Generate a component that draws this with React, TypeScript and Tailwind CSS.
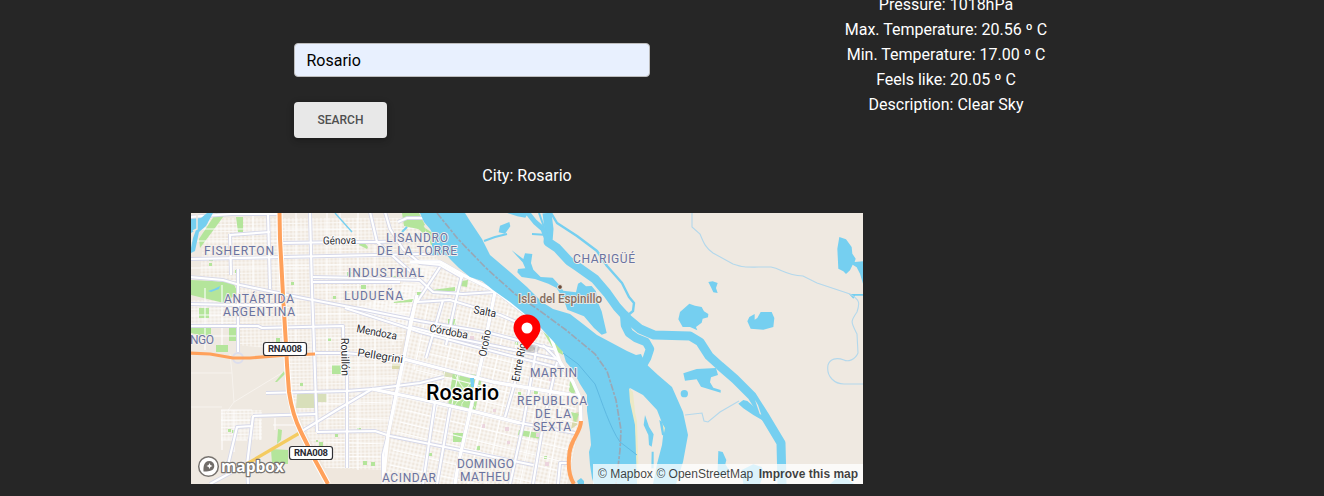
import React from "react";

const WATER = "#75cff0";
const PARK = "#b4e59b";
const SANS = '"Roboto", "Open Sans", sans-serif';

const mainRoads = [
  "M190 259L283 257L420 254L450 254",
  "M190 217L232 214L281 214",
  "M283 243L345 242L377 242L410 241",
  "M313 277L360 278L420 280",
  "M313 282L400 282",
  "M190 277L223 280L240 285L283 294L313 300L360 309L420 321L490 333L556 350",
  "M190 304L236 305L283 305",
  "M190 326L258 326L262 328L343 326L344 375",
  "M230 235L270 232",
  "M230 234L231 275",
  "M238 269L238 352",
  "M268 213L270 289",
  "M310 213L312 290L314 345L317 432",
  "M370 212L377 242L403 265L420 280L433 292L463 294L495 292",
  "M385 212L390 229L403 249L420 263L440 265L463 278",
  "M410 262L440 262L463 275L497 292L527 315L550 335",
  "M398 222L407 218L430 218",
  "M417 295L410 322L405 352L397 388L388 435L383 455L383 484",
  "M440 267L417 302M462 275L456 300L446 345",
  "M417 302L450 300L500 315L540 332",
  "M410 327L450 337L500 347L556 359",
  "M345 308L420 332L500 353L567 370",
  "M313 353L345 353L400 358L450 371L493 382L577 396",
  "M495 292L487 332L482 358L470 412L458 465L455 484",
  "M266 393L347 391L372 389L420 399L468 410L520 423L575 433",
  "M210 484L245 465",
  "M302 431L340 408L372 389L420 383L444 377",
  "M253 416L317 414",
  "M228 465L237 427L252 426M253 416L247 465L248 484",
  "M317 432L375 431L390 436L420 442L450 448L533 465",
  "M347 352L347 468",
  "M435 402L423 484M450 408L437 484M443 300L426 358",
  "M520 365L505 417M537 345L523 425L510 484M557 362L543 425L533 484",
  "M543 345L560 362L573 382L580 398L581 422",
  "M558 484L560 463L568 463",
];

const minorRoads = [
  "M190 229H280M190 241H280M190 268H310M285 229H385M285 265H375M315 290H412M190 315H310M190 336H240M315 314H405M315 338H405",
  "M205 288V350M222 285V345M253 213V300M296 213V350M327 213V430M340 213V325M358 213V470M375 245V390M393 270V345",
  "M315 365H402M315 378H400M315 404L392 402M317 418L390 420M324 442L386 444M330 456L382 457",
  "M222 410V450M234 410V452M221 420H250M221 410H252M221 440H247M260 420V440M275 418V430M273 425H298",
  "M420 340L570 377M418 351L570 387M416 370L575 409M412 385L578 423M405 410L570 450M400 422L568 463M397 432L560 471M393 450L540 484M390 465L480 484",
  "M428 305L414 370M458 310L420 484M472 305L440 464M508 312L468 484M521 321L486 484M548 346L520 484M565 380L548 484",
];

const parks = [
  "M191 280L233 282L238 293L224 303L191 295Z",
  "M216 213H226L212 232L200 248L199 239Z",
  "M236 217H243V232H238Z",
  "M191 327H211V336H203L191 333Z",
  "M199 308H209V318H199Z",
  "M229 328H236V341H229ZM216 345H228V352H216Z",
  "M362 240L368 247L367 249L359 245Z",
  "M402 213H419L425 225L418 229L404 226Z",
  "M410 213L418 216L426 230L424 234L414 225Z",
  "M432 290L455 287L455 291L433 292Z",
  "M448 319H456V325H448Z",
  "M453 372L478 375L482 378L475 411L448 406Z",
  "M332 365H341V374H332Z",
  "M275 382L284 371L285 374L277 382Z",
  "M271 449L288 450V464H272Z",
  "M278 429L282 430L281 440L277 444Z",
  "M453 433H463V442H453Z",
  "M519 430L541 433L540 439L518 435Z",
  "M461 281L468 280L467 287L461 286Z",
  "M541 328L562 348L563 355L554 350Z",
  "M570 380L576 388L574 395L569 391Z",
  "M571 412L579 414L575 423Z",
  "M393 302L413 299L412 302L394 303Z",
  "M361 285H366V289H361Z",
  "M425 228L434 234L436 244L431 245Z",
  "M498 291L512 300L516 305L509 302Z",
];

const dots: [number, number, number][] = [
  [209, 257, 4], [220, 250, 3], [235, 270, 3], [291, 282, 3], [209, 263, 3], [276, 338, 4], [333, 296, 3],
  [347, 272, 4], [392, 276, 4], [300, 383, 3], [307, 390, 3], [228, 429, 3], [232, 430, 3], [328, 338, 3],
  [335, 434, 3], [357, 428, 4], [363, 461, 4], [371, 462, 4], [319, 442, 4], [429, 453, 3], [476, 446, 4],
  [518, 392, 3], [534, 390, 4], [421, 320, 3], [515, 342, 3], [417, 292, 5], [316, 440, 2], [544, 456, 3],
];

const pinkDots: [number, number, number][] = [
  [481, 424, 4], [505, 427, 4], [435, 366, 4], [493, 409, 3], [507, 441, 3], [536, 433, 4], [545, 462, 4], [437, 334, 4], [470, 336, 4], [549, 378, 3],
];

type Label = { x: number; y: number; w: number; t: string };

const districts: Label[] = [
  { x: 204, y: 254.5, w: 70, t: "FISHERTON" },
  { x: 386, y: 241.5, w: 62, t: "LISANDRO" },
  { x: 377, y: 254.5, w: 80, t: "DE LA TORRE" },
  { x: 348, y: 276.5, w: 76, t: "INDUSTRIAL" },
  { x: 344, y: 299.5, w: 59, t: "LUDUEÑA" },
  { x: 224, y: 302.5, w: 70, t: "ANTÁRTIDA" },
  { x: 223, y: 315.5, w: 72, t: "ARGENTINA" },
  { x: 190, y: 343.5, w: 24, t: "NGO" },
  { x: 573, y: 263, w: 62, t: "CHARIGÜÉ" },
  { x: 530, y: 377, w: 47, t: "MARTIN" },
  { x: 517, y: 404.5, w: 70, t: "REPUBLICA" },
  { x: 535, y: 418, w: 36, t: "DE LA" },
  { x: 533, y: 431, w: 38, t: "SEXTA" },
  { x: 457, y: 467.5, w: 57, t: "DOMINGO" },
  { x: 460, y: 481, w: 50, t: "MATHEU" },
  { x: 382, y: 482, w: 54, t: "ACINDAR" },
];

const streets: (Label & { r: number })[] = [
  { x: 323, y: 244.500, w: 33, t: "Génova", r: -1 },
  { x: 473, y: 313, w: 23, t: "Salta", r: 11 },
  { x: 429, y: 331.500, w: 39, t: "Córdoba", r: 11 },
  { x: 356, y: 332, w: 41, t: "Mendoza", r: 11 },
  { x: 357, y: 356, w: 46, t: "Pellegrini", r: 9 },
  { x: 341, y: 338, w: 38, t: "Rouillón", r: 89 },
  { x: 486, y: 357, w: 27, t: "Oroño", r: -79 },
  { x: 519, y: 382, w: 44, t: "Entre Ríos", r: -79 },
];

function Shield({ x, y }: { x: number; y: number }) {
  return (
    <g>
      <rect x={x} y={y} width="43" height="13" rx="2.5" fill="#fff" stroke="#2f2f33" strokeWidth="1.2" />
      <text x={x + 4.5} y={y + 9.8} textLength="34" fontSize="9.5" fontWeight="700" fill="#2b2b33">RNA008</text>
    </g>
  );
}

function CityMap() {
  return (
    <svg className="block h-full w-full" viewBox="191 213 672 271" fontFamily={SANS}>
      <defs>
        <pattern id="gridStraight" width="16" height="14" patternUnits="userSpaceOnUse" patternTransform="rotate(-1)">
          <path d="M0 1H16M0 4.5H16M0 8H16M0 11.5H16M1 0V14M5 0V14M9 0V14M13 0V14" stroke="#fff" strokeWidth=".95" opacity=".8" />
        </pattern>
        <pattern id="gridTilted" width="16" height="16" patternUnits="userSpaceOnUse" patternTransform="rotate(13)">
          <path d="M0 1H16M0 5H16M0 9H16M0 13H16M1 0V16M5 0V16M9 0V16M13 0V16" stroke="#fff" strokeWidth="1.1" opacity=".9" />
        </pattern>
      </defs>
      <rect x="191" y="213" width="672" height="271" fill="#efe9e1" />

      <path d="M205 218H420L440 265L497 294L550 337L580 395V430L567 484H330L305 430L292 395L287 350L237 345L236 290L200 275Z" fill="#efe7dd" />
      <path d="M205 218H420L440 265L415 300L400 352L383 470L325 468L305 430L292 395L287 350L237 345L236 290L200 275Z" fill="url(#gridStraight)" />
      <path d="M221 410H262V440H221Z M191 300H236V326H191Z" fill="url(#gridStraight)" />
      <path d="M412 262L440 264L497 294L550 337L575 390L578 430L567 484H385L397 388L408 330L350 310L400 290Z" fill="url(#gridTilted)" />
      <path d="M191 373H232L234 402M191 407H222M234 402L285 371M232 373L230 354M234 402L221 420" fill="none" stroke="#f7f3ee" />
      <path d="M297 394H327V402H317V408H296Z M443 371H453V377H443Z" fill="#d8dfba" />
      <path d="M574 413L579 412L577 425L571 429Z M392 364H400V369H392Z" fill="#d9d9ac" />

      <g fill={PARK}>
        {parks.map((d) => <path key={d} d={d} />)}
        {dots.map(([x, y, s]) => <rect key={`${x}-${y}`} x={x} y={y} width={s} height={s} />)}
      </g>
      <path d="M455 375L475 408M475 376L455 405M460 374C455 385 465 385 467 393S460 400 462 407" fill="none" stroke="#e4f6d9" />
      <g fill="#ecd5de">
        {pinkDots.map(([x, y, s]) => <rect key={`${x}-${y}`} x={x} y={y} width={s} height={s} />)}
      </g>

      <g fill="none" stroke="#fff" strokeWidth="1.2" opacity=".9">
        {minorRoads.map((d) => <path key={d} d={d} />)}
      </g>
      <g fill="none" stroke="#d6d8e9" strokeWidth="3.9" strokeLinejoin="round">
        {mainRoads.map((d) => <path key={d} d={d} />)}
      </g>
      <g fill="none" stroke="#fff" strokeWidth="2.2" strokeLinejoin="round">
        {mainRoads.map((d) => <path key={d} d={d} />)}
      </g>
      <g fill="none" stroke="#fff" strokeWidth="3.3" strokeLinejoin="round">
        <path d="M400 358L450 371L493 382L577 396M372 389L420 399L468 410L520 423M495 292L487 332L482 358L470 412L458 465L455 484" />
        <path d="M410 262L440 262L463 275L497 292L527 315L550 335L560 362L573 382L580 398L581 422M417 295L405 352L388 435L383 484" />
      </g>
      <circle cx="238" cy="358" r="5" fill="none" stroke="#dcdeed" strokeWidth="2" />

      <g fill={WATER}>
        <path d="M420 213L424 222L430 229L434 236L432 244L432 255H447L450 259L459 268L470 277L482 281L493 290L510 302L526 315L540 327L553 341L563 352L566 362L573 370L580 384L587 395V411L590 432L591 445L589 452L590 465L592 478L594 484H638L637 455L635 418L632 402L630 388L643 395L657 410L664 428L662 445L657 464L653 484H676L683 462L688 435L683 412L672 387L658 375L645 363L641 354L636 355L627 351L612 343L597 335L583 324L570 314L553 309L542 302L527 287L510 272L490 255L482 239L476 230L470 221L465 213Z" />
        <path d="M191 219L201 218L207 213H213L206 226L199 232L195 251L191 253V248L193 238L196 230L191 233Z" />
        <path d="M208 291L214 289L220 286L219 289L211 292Z" />
        <path d="M470 378H474V387H471ZM577 481L581 478L584 481V484H578Z" />
      </g>
      <path d="M629 388L633 392L635 412L637 421L639 484H637L635 425L630 402Z M660 420L665 428L664 433Z" fill="#ece9c6" />
      <path d="M197 214V229L193 231" fill="none" stroke="#efe9e1" strokeWidth="1.5" />

      <g fill="none" stroke={WATER} strokeLinejoin="round">
        <path d="M547 213L549 229L548 242L557 248L569 261L578 267L595 279L607 293L617 307L628 319L640 329L654 335L690 336L700 342L709 356L720 366L735 379L752 396L766 418L781 443L782 484" strokeWidth="9" />
        <path d="M624 312L625 325L629 333L636 338L646 342L650 349L647 358L643 365" strokeWidth="8.5" />
        <path d="M527 212L535 222L543 229L548 242" strokeWidth="5" />
        <path d="M551 213L557 223L577 236L597 251L607 266L622 283L629 297L634 303L633 311L627 316" strokeWidth="2.4" />
        <path d="M484 241L495 237L507 234M532 234L548 235" strokeWidth="2" />
        <path d="M539 213L544 227" strokeWidth="2" />
        <path d="M335 213L352 232" strokeWidth="1.4" />
        <path d="M407 227L402 232" strokeWidth="2" />
      </g>

      <g transform="translate(480 213) scale(.33333)" fill={WATER}>
        <path d="M60 38L88 27L91 40L75 62L56 58Z M82 0H145L136 14L112 10Z" />
        <path d="M95 112L130 138L135 121L157 123L153 150L160 170L182 192L218 194L235 213L250 233L288 238L294 212L303 207L318 220L335 219L348 235L351 262L365 295L380 360L365 365L342 345L312 310L262 290L252 262L230 225L205 212L165 198L125 192L112 178L114 168L136 166L128 148Z" />
      </g>
      <g transform="translate(630 212) scale(.33333)" fill={WATER}>
        <path d="M628 75L648 82L665 105L667 125L677 140L674 150L699 148V215L690 185L680 166L668 158L660 175L648 186L640 178L625 170L622 110Z" />
        <path d="M235 210L248 208L263 213L258 228L263 243L250 241L243 226Z" />
        <path d="M150 300L178 275L195 281L215 285L222 298L235 306L234 316L218 320L215 332L198 345L202 355L180 345H158L145 322Z" />
        <path d="M352 328L358 315L374 306V323L382 318L392 300H425L433 318L430 345L400 353L362 350Z" />
        <path d="M657 246H699V251H675L670 260Z" />
      </g>
      <g transform="translate(630 345) scale(.33333)" fill={WATER}>
        <path d="M160 85L200 72L258 69L264 90L243 97L240 112L250 128L272 135V143L235 132L213 125L200 103L165 107Z" />
        <circle cx="163" cy="146" r="11" />
        <path d="M325 176L340 165L352 168L380 192L392 214L400 227L370 210L340 190Z" />
        <path d="M265 318L278 321L289 345L286 357L300 380L262 400L264 345Z" />
        <path d="M335 375L370 358L395 366L402 385L390 417H340Z M600 417L620 400H650L672 417Z" />
        <path d="M45 210L57 245L71 268L65 305L57 300L55 270L41 240Z M65 320H71V370H64Z M88 225L97 230L103 272L96 270Z" />
        <path d="M375 165L384 180L394 210L389 206Z" fill="#efe9e1" />
      </g>
      <g fill="none" stroke="#b3d8ec" strokeWidth="1.1">
        <path d="M692 213V227L700 234C704 244 706 248 713 253L733 264C745 268 745 267 771 267C782 269 785 275 803 276L817 283L850 294C860 300 860 303 857 312C850 322 851 322 857 334L858 353C855 360 848 362 844 360C836 357 830 359 828 365C826 377 835 384 844 384H863" />
        <path d="M685 415L702 413L704 421L708 422L720 412L739 401" />
      </g>
      <path d="M563 353L578 364L595 384C602 402 610 428 620 442L637 455" fill="none" stroke="#5eb9e2" />
      <path d="M437 213L458 239L486 268L515 294L536 308L566 330L595 354L607 371L616 400L621 430L620 450L616 484" fill="none" stroke="#98a8b7" strokeWidth="1.7" strokeDasharray="7 1.500 3 1.500" />

      <path d="M245 465L303 431" stroke="#f4cb60" strokeWidth="3.2" />
      <g fill="none" stroke="#fff" strokeWidth="6">
        <path d="M279.500 212L280 239L283 295L286 345L287 365L289 392L294 415L301 432L315 460L328 484" />
      </g>
      <g fill="none" stroke="#ffa15b" strokeWidth="4" strokeLinejoin="round">
        <path d="M190 353L210 354L233 358L250 358L287 355L315 354" strokeWidth="3.2" />
        <path d="M279.500 212L280 239L283 295L286 345L287 365L289 392C292 412 296 422 301 432L315 460L328 484" />
        <path d="M581 421C581 433 569 440 569 458C568 470 570 478 574 484" />
      </g>

      <g fontSize="12" fontWeight="400" fill="#6a73a0" stroke="#f4efea" strokeWidth="1.8" strokeLinejoin="round" paintOrder="stroke">
        {districts.map((l) => <text key={l.t} x={l.x} y={l.y} textLength={l.w}>{l.t}</text>)}
      </g>
      <g fontSize="11" fontWeight="400" fill="#2c2c30" stroke="#fff" strokeWidth="1.8" strokeLinejoin="round" paintOrder="stroke">
        {streets.map((l) => (
          <text key={l.t} x={l.x} y={l.y} textLength={l.w} lengthAdjust="spacingAndGlyphs" transform={`rotate(${l.r} ${l.x} ${l.y})`}>{l.t}</text>
        ))}
      </g>
      <circle cx="560" cy="287" r="2.4" fill="#6b4c3b" stroke="#f3ece5" />
      <text x="518" y="303" textLength="84" lengthAdjust="spacingAndGlyphs" fontSize="12" fontWeight="500" fill="#856f62" stroke="#f3ece5" strokeWidth="1.600" paintOrder="stroke">Isla del Espinillo</text>
      <text x="426" y="400" textLength="73" lengthAdjust="spacingAndGlyphs" fontSize="22.500" fontWeight="500" fill="#000" stroke="#fff" strokeWidth="2.500" paintOrder="stroke">Rosario</text>
      <Shield x={263.5} y={342.5} />
      <Shield x={289.5} y={446.5} />

      <g>
        <ellipse cx="531" cy="348.500" rx="9" ry="4.500" fill="#444" opacity=".12" />
        <ellipse cx="530" cy="348.500" rx="5" ry="3" fill="#444" opacity=".2" />
        <path d="M527 350C523 344 513.500 336 513.500 328A13.500 13.500 0 0 1 540.500 328C540.500 336 531 344 527 350Z" fill="#f00" />
        <circle cx="527" cy="328" r="5.500" fill="#fff" />
      </g>

      <g>
        <circle cx="208.500" cy="466.500" r="9.800" fill="#fff" stroke="#77736f" strokeWidth="1.500" />
        <path d="M203.500 471.500C203.300 469 203 461 209.300 461A5 5 0 0 1 214.300 466C214.300 471.800 206 471.700 203.500 471.500Z" fill="#706c69" />
        <path d="M209.500 463L210.400 465.100L212.500 466L210.400 466.900L209.500 469L208.600 466.900L206.500 466L208.600 465.100Z" fill="#fff" />
        <text x="221" y="471.500" textLength="63" lengthAdjust="spacingAndGlyphs" fontFamily='"Open Sans", sans-serif' fontSize="16" fontWeight="700" fill="#fff" stroke="#77736f" strokeWidth="2.500" strokeLinejoin="round" paintOrder="stroke">mapbox</text>
      </g>
    </svg>
  );
}

const readings = [
  "Pressure: 1018hPa",
  "Max. Temperature: 20.56 º C",
  "Min. Temperature: 17.00 º C",
  "Feels like: 20.05 º C",
  "Description: Clear Sky",
];

export default function App() {
  return (
    <main className="h-[496px] w-full overflow-hidden bg-[#262626] font-['Roboto',sans-serif] text-base text-white">
      <div className="flex h-[163px] pl-[294px]">
        <form className="flex w-[356px] flex-col items-start pt-[43px]" onSubmit={(e) => e.preventDefault()}>
          <input
            aria-label="City"
            defaultValue="Rosario"
            className="h-[34px] w-full rounded border border-[#bdbdbd] bg-[#e8f0fe] px-[11.5px] text-black outline-none"
          />
          <button className="mt-[25px] h-9 w-[93px] rounded bg-[#e8e8e8] text-xs font-medium text-[#4f4f4f] uppercase shadow-[0_2px_5px_0_rgba(0,0,0,0.2),0_2px_10px_0_rgba(0,0,0,0.1)]">
            Search
          </button>
        </form>
        <ul className="-mt-2 ml-[99px] w-[394px] text-center leading-[25px]">
          {readings.map((r) => <li key={r}>{r}</li>)}
        </ul>
      </div>
      <section className="ml-[191px] w-[672px]">
        <p className="h-[50px] text-center leading-[25px]">City: Rosario</p>
        <div className="relative h-[271px] overflow-hidden">
          <CityMap />
          <div className="absolute right-0 bottom-0 flex h-5 w-[270px] items-center bg-white/75 pl-[5px] font-['Liberation_Sans',sans-serif] text-xs whitespace-nowrap text-black/75">
            <span>© Mapbox</span>
            <span className="ml-[3.5px]">© OpenStreetMap</span>
            <span className="ml-[5.5px] font-bold">Improve this map</span>
          </div>
        </div>
      </section>
    </main>
  );
}
